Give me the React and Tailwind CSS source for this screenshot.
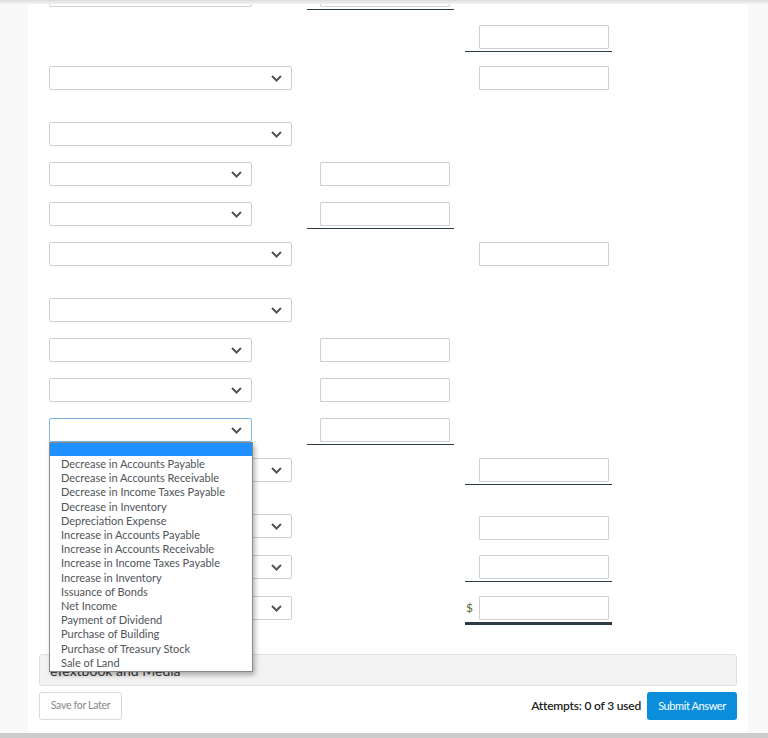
import React from "react";

const options = [
  "Decrease in Accounts Payable",
  "Decrease in Accounts Receivable",
  "Decrease in Income Taxes Payable",
  "Decrease in Inventory",
  "Depreciation Expense",
  "Increase in Accounts Payable",
  "Increase in Accounts Receivable",
  "Increase in Income Taxes Payable",
  "Increase in Inventory",
  "Issuance of Bonds",
  "Net Income",
  "Payment of Dividend",
  "Purchase of Building",
  "Purchase of Treasury Stock",
  "Sale of Land",
];

// each row: top margin, select size, middle cell, right cell
const rows = [
  { mt: "-mt-[17px]", sel: "narrow", mid: "under" },
  { mt: "mt-[18px]", right: "under" },
  { mt: "mt-[17px]", sel: "wide", right: "input" },
  { mt: "mt-[32px]", sel: "wide" },
  { mt: "mt-[16px]", sel: "narrow", mid: "input" },
  { mt: "mt-[16px]", sel: "narrow", mid: "under" },
  { mt: "mt-[16px]", sel: "wide", right: "input" },
  { mt: "mt-[32px]", sel: "wide" },
  { mt: "mt-[16px]", sel: "narrow", mid: "input" },
  { mt: "mt-[16px]", sel: "narrow", mid: "input" },
  { mt: "mt-[16px]", sel: "narrow", mid: "under", focus: true },
  { mt: "mt-[16px]", sel: "wide", right: "under" },
  { mt: "mt-[32px]", sel: "wide", right: "input", shift: true },
  { mt: "mt-[17px]", sel: "wide", right: "under" },
  { mt: "mt-[17px]", sel: "wide", right: "double" },
];

function Chevron() {
  return (
    <svg width="11" height="7" viewBox="0 0 11 7" className="text-[#555]">
      <polyline points="1,1 5.5,5.5 10,1" fill="none" stroke="currentColor" strokeWidth="2" />
    </svg>
  );
}

function Select({ size, focus }) {
  return (
    <div
      className={`${size === "wide" ? "w-[243px]" : "w-[203px]"} h-6 bg-white rounded-[2px] border ${
        focus ? "border-[#7fb8e8]" : "border-[#cfcfcf]"
      } flex items-center justify-end pr-[9px]`}
    >
      <Chevron />
    </div>
  );
}

function Box() {
  return <div className="w-[130px] h-6 bg-white border border-[#cfcfcf] rounded-[1px]" />;
}

function Cell({ kind, shift, right }) {
  if (!kind) return null;
  const pad = right ? "pl-[14px]" : "pl-[13px]";
  if (kind === "input") {
    return (
      <div className={`w-[147px] ${pad} ${shift ? "pt-[2px]" : ""}`}>
        <Box />
      </div>
    );
  }
  if (kind === "double") {
    return (
      <div className="w-[147px] flex items-center border-b-[3px] border-[#2d3b45] pb-[2px]">
        <span className="w-[14px] text-[12px] text-[#556b2f] pl-[1px]">$</span>
        <Box />
      </div>
    );
  }
  return (
    <div className={`w-[147px] ${pad} border-b border-[#2d3b45] pb-[2px]`}>
      <Box />
    </div>
  );
}

function Row({ row }) {
  return (
    <div className={`flex h-6 items-start ${row.mt}`}>
      <div className="w-[258px] shrink-0">{row.sel && <Select size={row.sel} focus={row.focus} />}</div>
      <div className="w-[158px] shrink-0">
        <Cell kind={row.mid} />
      </div>
      <div className="w-[147px] shrink-0">
        <Cell kind={row.right} shift={row.shift} right />
      </div>
    </div>
  );
}

export default function App() {
  return (
    <div className="relative w-[768px] h-[738px] overflow-hidden bg-[#f9f9f9] flex flex-col" style={{ fontFamily: "Lato, 'Liberation Sans', sans-serif" }}>
      <div className="absolute top-0 left-0 right-0 h-[4px] z-20 bg-gradient-to-b from-[#dcdcdc] to-[#f4f4f4]" />
      <div className="relative ml-[28px] w-[720px] h-[733px] shrink-0 bg-white flex flex-col">
        <div className="pl-[21px] flex flex-col">
          {rows.map((r, i) => (
            <Row key={i} row={r} />
          ))}
        </div>

        <div className="mx-[11px] mt-[34px] h-[32px] rounded-[3px] border border-[#e0e0e0] bg-[#f3f3f3] px-[10px] pt-[5px] text-[14px] text-[#333]">
          eTextbook and Media
        </div>

        <div className="mx-[11px] mt-[6px] flex items-center">
          <button className="h-[28px] w-[83px] rounded-[3px] border border-[#dadada] bg-white text-[10.5px] text-[#888] tracking-[-0.3px]">
            Save for Later
          </button>
          <div className="flex-1" />
          <span className="text-[12px] font-semibold text-[#222] tracking-[-0.2px] mr-[6px]">Attempts: 0 of 3 used</span>
          <button className="h-[28px] w-[90px] rounded-[3px] bg-[#0a8edc] text-[11px] text-white tracking-[-0.4px]">
            Submit Answer
          </button>
        </div>

        <div className="absolute left-[21px] top-[442px] w-[204px] bg-white border border-[#8a8a8a] shadow-[2px_3px_5px_rgba(0,0,0,0.3)] z-10">
          <div className="h-[13px] bg-[#1e90ff]" />
          <div className="pl-[11px] pt-[1px] pb-[1px]">
            {options.map((o) => (
              <div key={o} className="text-[11px] leading-[14.2px] text-[#4f5459] whitespace-nowrap">
                {o}
              </div>
            ))}
          </div>
        </div>
      </div>
      <div className="h-[5px] shrink-0 bg-[#cccccc]" />
    </div>
  );
}
